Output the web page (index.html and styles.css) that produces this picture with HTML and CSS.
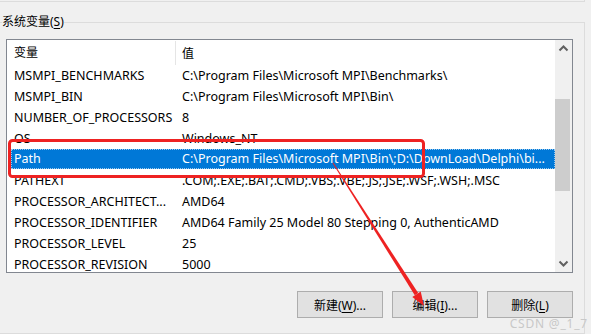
FILE: index.html
```html
<!DOCTYPE html>
<html lang="zh-CN">
<head>
    <meta charset="UTF-8">
    <title>系统变量</title>
    <link rel="stylesheet" href="styles.css">
</head>
<body>
    <div class="prev-group"></div>
    <fieldset class="group">
        <legend>系统变量(<u>S</u>)</legend>
        <div class="listbox">
            <div class="list-main">
                <div class="list-header">
                    <div class="col-name">变量</div>
                    <div class="col-value">值</div>
                </div>
                <div class="list-body">
                    <div class="row"><span class="col-name">MSMPI_BENCHMARKS</span><span class="col-value">C:\Program Files\Microsoft MPI\Benchmarks\</span></div>
                    <div class="row"><span class="col-name">MSMPI_BIN</span><span class="col-value">C:\Program Files\Microsoft MPI\Bin\</span></div>
                    <div class="row"><span class="col-name">NUMBER_OF_PROCESSORS</span><span class="col-value">8</span></div>
                    <div class="row"><span class="col-name">OS</span><span class="col-value">Windows_NT</span></div>
                    <div class="row selected"><span class="col-name">Path</span><span class="col-value">C:\Program Files\Microsoft MPI\Bin\;D:\DownLoad\Delphi\bi...</span></div>
                    <div class="row"><span class="col-name">PATHEXT</span><span class="col-value">.COM;.EXE;.BAT;.CMD;.VBS;.VBE;.JS;.JSE;.WSF;.WSH;.MSC</span></div>
                    <div class="row"><span class="col-name">PROCESSOR_ARCHITECT...</span><span class="col-value">AMD64</span></div>
                    <div class="row"><span class="col-name">PROCESSOR_IDENTIFIER</span><span class="col-value">AMD64 Family 25 Model 80 Stepping 0, AuthenticAMD</span></div>
                    <div class="row"><span class="col-name">PROCESSOR_LEVEL</span><span class="col-value">25</span></div>
                    <div class="row"><span class="col-name">PROCESSOR_REVISION</span><span class="col-value">5000</span></div>
                </div>
            </div>
            <div class="scrollbar">
                <svg class="arrow" width="17" height="17" viewBox="0 0 17 17"><path d="M4.5 10.5 L8.5 6.5 L12.5 10.5" fill="none" stroke="#606060" stroke-width="2"/></svg>
                <div class="track"><div class="thumb"></div></div>
                <svg class="arrow" width="17" height="17" viewBox="0 0 17 17"><path d="M4.5 6.5 L8.5 10.5 L12.5 6.5" fill="none" stroke="#606060" stroke-width="2"/></svg>
            </div>
        </div>
        <div class="buttons">
            <button class="btn">新建(<u>W</u>)...</button>
            <button class="btn">编辑(<u>I</u>)...</button>
            <button class="btn">删除(<u>L</u>)</button>
        </div>
    </fieldset>

    <!-- annotation drawn over the dialog -->
    <svg class="markup" width="591" height="334" viewBox="0 0 591 334">
        <rect x="9.5" y="140.5" width="414" height="36" rx="3" fill="none" stroke="#ee2222" stroke-width="3"/>
        <polygon points="333.4,162.7 332.6,163.3 414.8,295.3 418.2,293.1" fill="#ee2222"/>
        <polygon points="424,306 420.7,291.5 412.3,296.9" fill="#ee2222"/>
    </svg>
    <div class="watermark">CSDN @_1_7</div>
</body>
</html>
```

FILE: styles.css
```css
body {
    margin: 0;
    width: 591px;
    height: 334px;
    overflow: hidden;
    position: relative;
    background-color: #f0f0f0;
    font-family: "Noto Sans", "Noto Sans CJK SC", sans-serif;
    font-size: 12.5px;
    color: #000;
}
.prev-group {
    width: 584px;
    height: 1px;
    border-bottom: 1px solid #dcdcdc;
    border-right: 1px solid #dcdcdc;
}
.group {
    box-sizing: border-box;
    margin: 12px 0 0 0;
    padding: 0 0 0 6px;
    width: 585px;
    height: 320px;
    border: 1px solid #dcdcdc;
    border-left: none;
    min-width: 0;
}
.group legend {
    padding: 0;
    margin-left: -4px;
    line-height: 16px;
    font-size: 12px;
}
.group u, .btn u {
    text-decoration: underline;
    text-underline-offset: 2px;
}
.listbox {
    margin-top: 9px;
    width: 565px;
    height: 232px;
    border: 1px solid #828790;
    background: white;
    display: flex;
}
.list-main {
    flex: 1;
    overflow: hidden;
}
.list-header {
    height: 25px;
    display: flex;
    align-items: center;
    font-size: 12px;
}
.list-header .col-name {
    height: 24px;
    line-height: 24px;
    border-right: 1px solid #e5e5e5;
}
.col-name {
    width: 161px;
    padding-left: 7px;
    flex: none;
    white-space: nowrap;
}
.col-value {
    padding-left: 6px;
    white-space: nowrap;
}
.row {
    display: flex;
    height: 21px;
    line-height: 21px;
    margin-left: 4px;
}
.row .col-name {
    width: 165px;
    padding-left: 3px;
}
.row .col-value {
    padding-left: 3px;
}
.selected {
    background: #0078d7;
    color: white;
    height: 20px;
    line-height: 20px;
    margin-bottom: 1px;
    outline: 1px dotted #99c9ef;
    outline-offset: -1px;
}
.scrollbar {
    width: 17px;
    background: #f0f0f0;
    display: flex;
    flex-direction: column;
}
.scrollbar .arrow {
    display: block;
    flex: none;
}
.track {
    flex: 1;
    padding-top: 42px;
}
.thumb {
    width: 15px;
    height: 92px;
    background: #cdcdcd;
}
.buttons {
    display: flex;
    justify-content: flex-end;
    gap: 9px;
    width: 567px;
    margin-top: 18px;
}
.btn {
    width: 86px;
    height: 27px;
    background: #e1e1e1;
    border: 1px solid #adadad;
    font-family: inherit;
    font-size: 12px;
    color: #000;
    padding: 0;
}
.markup {
    position: absolute;
    left: 0;
    top: 0;
}
.watermark {
    position: absolute;
    right: 3px;
    bottom: 2px;
    color: #c8c8c8;
    font-size: 12px;
    letter-spacing: 0.8px;
}
```
